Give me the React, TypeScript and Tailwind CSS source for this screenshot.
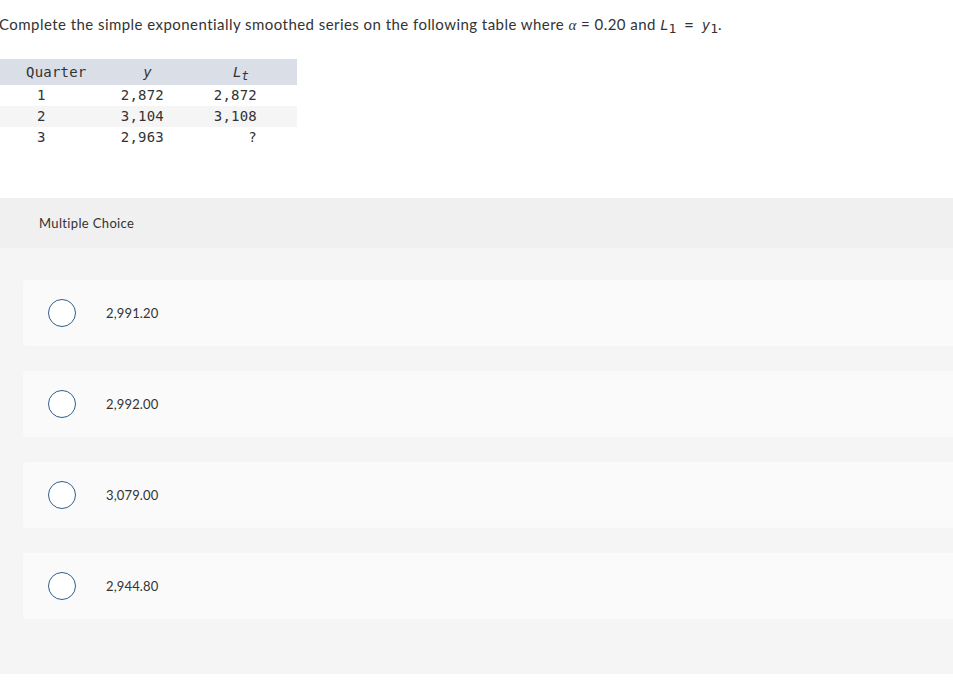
import React from 'react';

const ROWS = [
  { q: '1', y: '2,872', l: '2,872' },
  { q: '2', y: '3,104', l: '3,108' },
  { q: '3', y: '2,963', l: '?' },
];

const CHOICES = ['2,991.20', '2,992.00', '3,079.00', '2,944.80'];

const mono = { fontFamily: '"DejaVu Sans Mono", "Liberation Mono", monospace' };

export default function App() {
  return (
    <main className="min-h-screen bg-white text-[#333]" style={{ fontFamily: 'Lato, "Open Sans", sans-serif' }}>
      {/* Question */}
      <p className="pt-[14px] -ml-[1px] text-[15px] leading-[20px] tracking-[0.45px]">
        Complete the simple exponentially smoothed series on the following table where{' '}
        <i className="font-serif">α</i> = 0.20 and{' '}
        <span className="italic text-[14px] tracking-normal" style={mono}>
          L<sub className="text-[13px] not-italic">1</sub> = y<sub className="text-[13px] not-italic">1</sub>
        </span>
        .
      </p>

      {/* Table */}
      <div className="mt-[24px] w-[297px] text-[14px] tracking-[0.2px]" style={mono}>
        <div className="grid grid-cols-[100px_95px_102px] h-[26px] items-center bg-[#d9dee7]">
          <span className="pl-[26px]">Quarter</span>
          <span className="text-center italic">y</span>
          <span className="text-center italic pr-[10px]">
            L<sub className="text-[12px]">t</sub>
          </span>
        </div>
        {ROWS.map((r, i) => (
          <div
            key={r.q}
            className={`grid grid-cols-[100px_95px_102px] h-[21px] items-center ${i === 1 ? 'bg-[#f5f5f5]' : ''}`}
          >
            <span className="pl-[37px]">{r.q}</span>
            <span className="text-right pr-[31px]">{r.y}</span>
            <span className="text-right pr-[40px]">{r.l}</span>
          </div>
        ))}
      </div>

      {/* Multiple choice header */}
      <div className="mt-[50px] h-[50px] bg-[#f0f0f0] flex items-center pl-[39px] pt-[2px] text-[13px] tracking-[0.35px]">
        Multiple Choice
      </div>

      {/* Options */}
      <div className="bg-[#f5f5f5] pt-[32px] pb-[55px] pl-[23px] flex flex-col gap-[25px]">
        {CHOICES.map((c) => (
          <div key={c} className="h-[66px] bg-[#fafafa] rounded-l-[3px] flex items-center pl-[25px]">
            <span className="w-[28px] h-[28px] rounded-full border-[1.5px] border-[#2f5f8f] bg-white" />
            <span className="ml-[30px] pt-[2px] text-[13px] tracking-[0.15px]">{c}</span>
          </div>
        ))}
      </div>
    </main>
  );
}
